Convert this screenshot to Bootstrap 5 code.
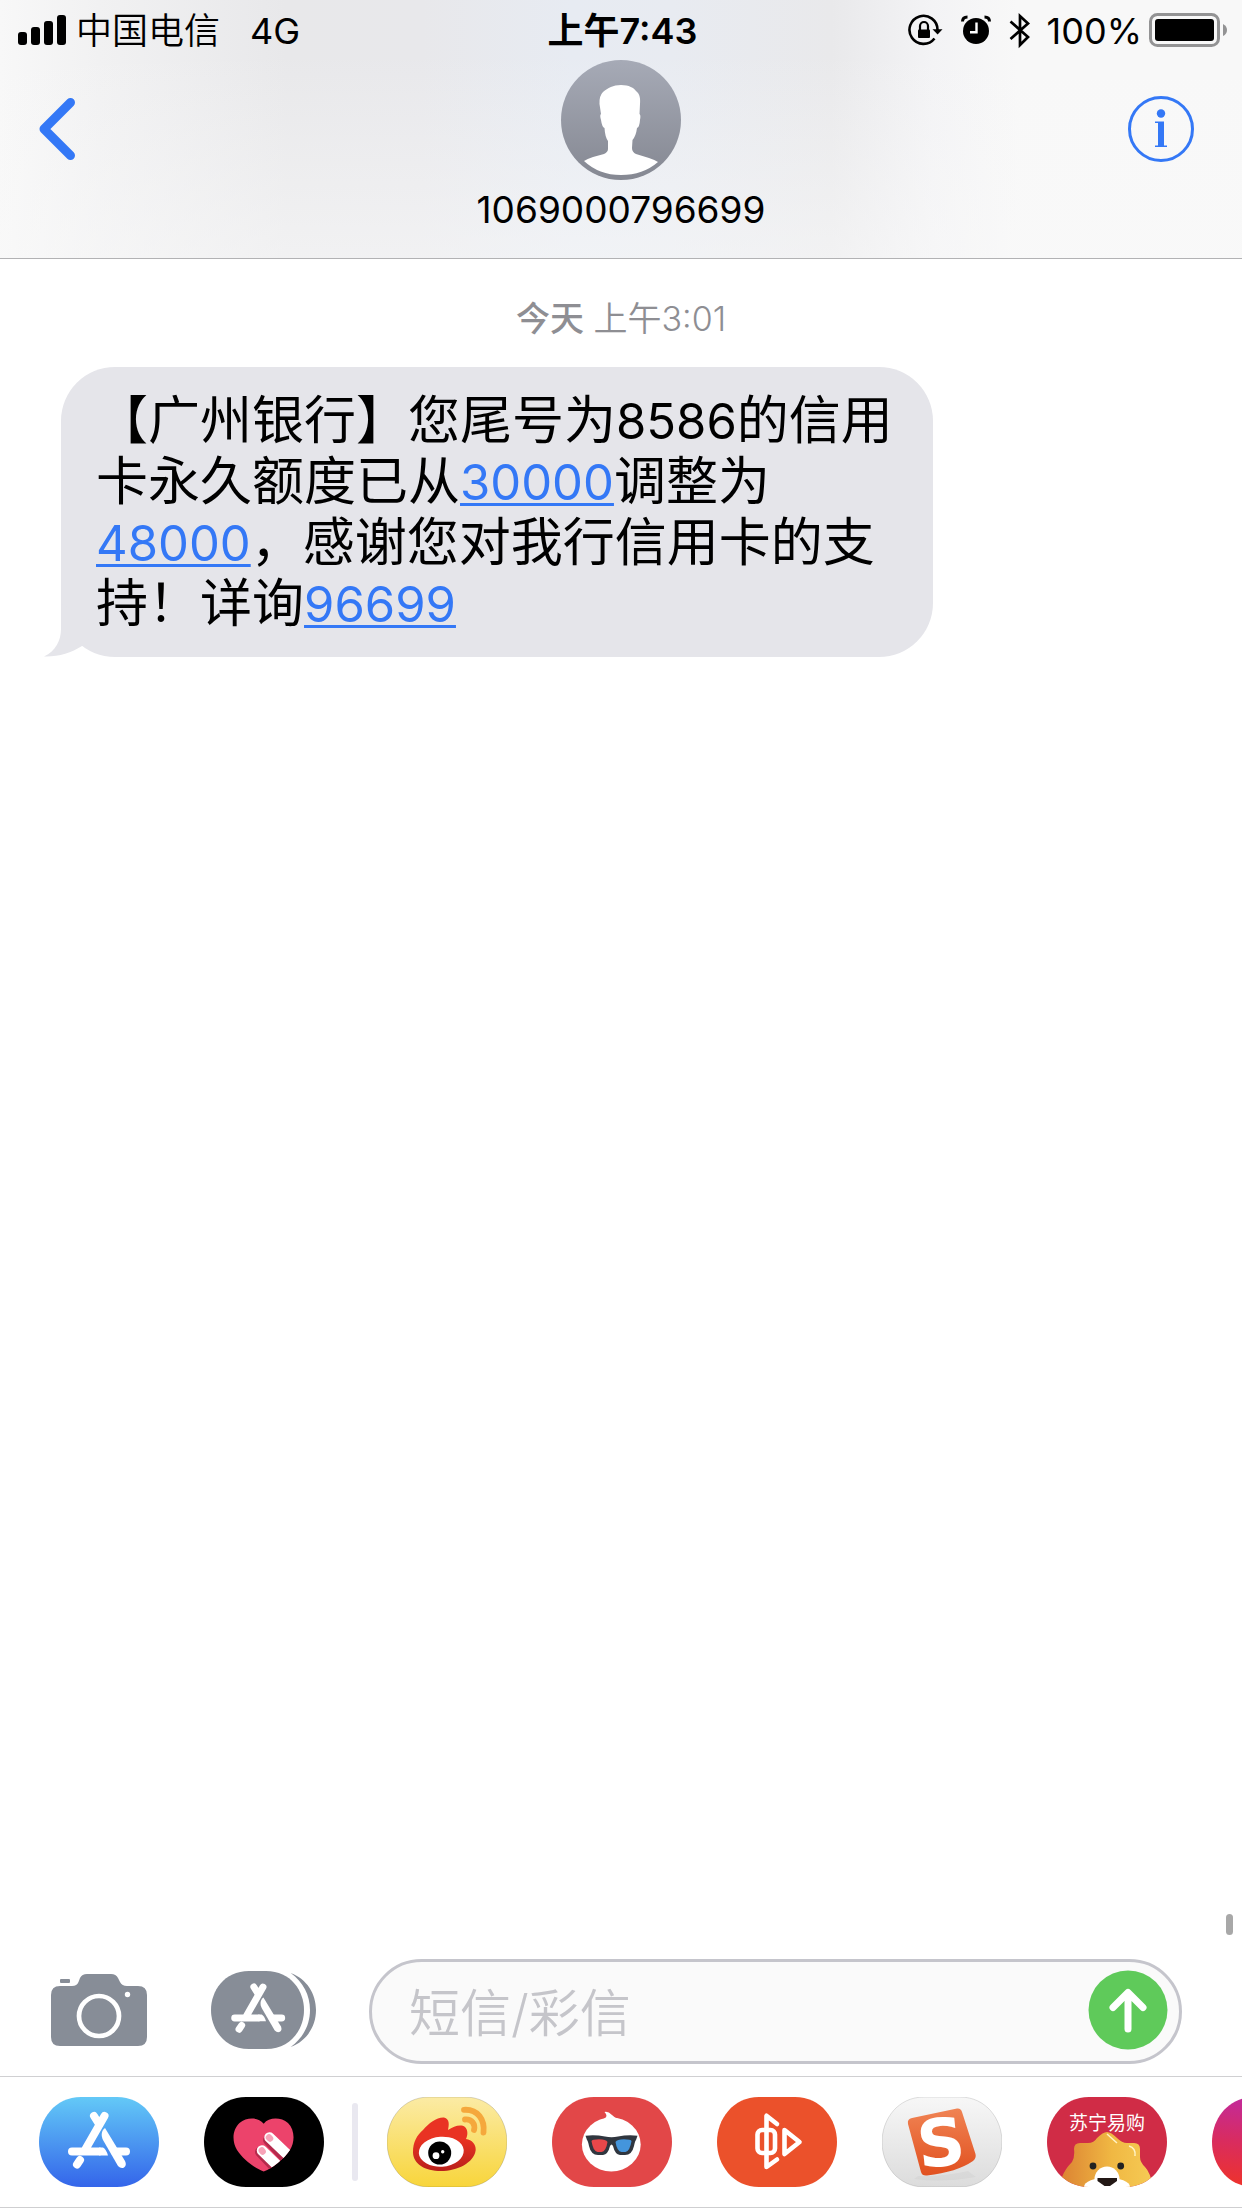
<!DOCTYPE html>
<html lang="zh-CN">
<head>
<meta charset="utf-8">
<meta name="viewport" content="width=device-width, initial-scale=1">
<title>1069000796699</title>
<link href="https://cdn.jsdelivr.net/npm/bootstrap@5.3.0/dist/css/bootstrap.min.css" rel="stylesheet">
<style>
:root { --ios-blue: #3478f6; --ios-gray: #878d97; }
body { font-family: Inter, "Noto Sans CJK SC", sans-serif; color: #000; background: #fff; }
svg { display: block; flex: none; }
.phone-head {
  border-bottom: 1px solid #b2b2b4;
  background:
    linear-gradient(to bottom, rgba(249,249,249,0) 20%, rgba(249,249,249,.55)),
    linear-gradient(to right, #f8f8f8 0, #f1f1f2 8%, #e8e8ea 23%, #e8e8eb 34%, #e7ebf2 46%, #e8ebf1 54%, #e9e9eb 67%, #f3f3f5 75%, #f8f8f8 82%);
}
.status-row { height: 60px; padding: 0 15px 0 18px; font-size: 36px; line-height: 60px; }
.status-row span, .clock { padding-top: 2px; }
.carrier { margin-left: 9px; font-weight: 350; }
.network { margin-left: 30px; }
.clock { font-weight: 600; line-height: 58px; }
.status-icons svg + svg { margin-left: 18px; }
.charge { margin: 0 7px 0 16px; }
.title-row { height: 198px; }
.title-row .side { padding: 36px 48px 0 38px; }
.contact { font-size: 37px; line-height: 60px; }
.stamp { padding-top: 30px; font-size: 34px; line-height: 60px; color: #8e8e93; font-weight: 350; }
.stamp strong { font-weight: 500; }
.thread { padding: 0 61px; }
.bubble { max-width: 872px; margin-top: 18px; padding: 23px 32px 23px 35px; border-radius: 54px; background: #e5e5ea; font-size: 52px; line-height: 61px; }
.bubble .tail { left: -17px; bottom: 0; }
.num { font-size: 49px; line-height: 1; }
a.num { color: var(--ios-blue); text-decoration-thickness: 3px; text-underline-offset: 3px; text-decoration-skip-ink: none; }
.scroll-thumb { right: 9px; bottom: 24px; width: 7px; height: 21px; border-radius: 4px; background: #a8a8a8; }
.composer { padding: 0 60px 12px 51px; }
.composer .btn { margin-bottom: 3px; }
.tool-apps { margin: 0 53px 0 64px; }
.entry { height: 105px; padding: 0 11px 0 37px; border: 3px solid #c5c5cc; border-radius: 53px; background: #fafafa; }
.entry .form-control { padding: 4px 0 0; font-size: 51px; line-height: 60px; font-weight: 350; color: #000; }
.entry .form-control::placeholder { color: #c5c5ca; opacity: 1; }
.app-strip { border-top: 1px solid #d0d0d2; border-bottom: 1px solid #cfcfd1; padding: 20px 0 20px 39px; }
.app-group { gap: 45px; }
.strip-divider { flex: none; width: 6px; height: 78px; margin: 0 29px 0 28px; border-radius: 3px; background: #e9e8f0; }
</style>
<script src="https://cdn.jsdelivr.net/npm/bootstrap@5.3.0/dist/js/bootstrap.bundle.min.js"></script>
</head>
<body class="d-flex flex-column min-vh-100 overflow-hidden">

<!-- shared shapes -->
<svg width="0" height="0" class="position-absolute" aria-hidden="true">
  <defs>
    <path id="pill" d="M42 0H78C104 0 120 22 120 45S104 90 78 90H42C16 90 0 68 0 45S16 0 42 0Z"/>
    <clipPath id="pillClip"><use href="#pill"/></clipPath>
    <g id="storeMark" fill="none" stroke="#fff" stroke-width="8" stroke-linecap="round">
      <path d="M55 19L60 27M65.500 19L46 53M33 54.500H60M76 54.500H87M41 63L38 67.500"/>
      <path d="M60 50.500H64Q67 52 69 58.400H60Z" fill="#fff" stroke="none"/>
      <path d="M66 31C62 34 62 39 64 43L79 69Q82 72 85 70.500Q88 68 86 64Z" fill="#fff" stroke="none"/>
    </g>
    <linearGradient id="gStore" x2="0" y2="1"><stop stop-color="#63c9f7"/><stop offset="1" stop-color="#3465ea"/></linearGradient>
    <linearGradient id="gYellow" x2="0" y2="1"><stop stop-color="#fbeba5"/><stop offset="1" stop-color="#f8d53b"/></linearGradient>
    <linearGradient id="gFlame" x2="0" y2="1"><stop offset=".4" stop-color="#e93323"/><stop offset="1" stop-color="#b9201a"/></linearGradient>
    <linearGradient id="gSilver" x2="0" y2="1"><stop stop-color="#f7f7f7"/><stop offset="1" stop-color="#dcdcdc"/></linearGradient>
    <linearGradient id="gOrange" x2="0" y2="1"><stop stop-color="#f08353"/><stop offset="1" stop-color="#e1501f"/></linearGradient>
    <linearGradient id="gLion"><stop stop-color="#dc8433"/><stop offset=".55" stop-color="#f0b843"/><stop offset="1" stop-color="#f6cb55"/></linearGradient>
    <linearGradient id="gMagenta" x1=".25" y1="0" x2=".1" y2="1"><stop stop-color="#c22a9c"/><stop offset=".5" stop-color="#d92c5e"/><stop offset="1" stop-color="#ef3329"/></linearGradient>
    <linearGradient id="gAvatar" x2="0" y2="1"><stop stop-color="#a6aab6"/><stop offset="1" stop-color="#858892"/></linearGradient>
    <clipPath id="heartClip"><path id="heart" d="M59.700 26.700C65 20 77 20 84 26C91 33 91 45 86 53C80 62 69 71 59.700 74.500C50 71 39 62 33 53C28 45 28 33 35.500 26C43 20 54 20 59.700 26.700Z"/></clipPath>
  </defs>
</svg>

<header class="phone-head">
  <div class="status-row d-flex">
    <div class="d-flex align-items-center flex-fill w-50">
      <svg width="49" height="30" aria-hidden="true"><rect y="17" width="9" height="13" rx="3"/><rect x="13" y="12" width="9" height="18" rx="3"/><rect x="26" y="6" width="9" height="24" rx="3"/><rect x="39" width="9" height="30" rx="3"/></svg>
      <span class="carrier">中国电信</span><span class="network">4G</span>
    </div>
    <div class="clock text-nowrap">上午7:43</div>
    <div class="status-icons d-flex align-items-center justify-content-end flex-fill w-50">
      <svg width="35" height="32" aria-label="竖排方向锁定">
        <path d="M29.500 16A14 14 0 1 0 26.500 24.500" fill="none" stroke="#000" stroke-width="2.600"/>
        <path d="M24.500 15.200H34.500L29.600 20.600Z"/><rect x="10" y="15.500" width="12" height="8.500" rx="1"/>
        <path d="M12 16V12A4 4 0 0 1 20 12V16" fill="none" stroke="#000" stroke-width="2.200"/>
      </svg>
      <svg width="30" height="30" aria-label="闹钟">
        <circle cx="15" cy="16" r="13"/><path d="M1.500 6.500Q1.500 2 6.500 2M28.500 6.500Q28.500 2 23.500 2" fill="none" stroke="#000" stroke-width="3"/>
        <path d="M15.500 7.500V17.300H9" fill="none" stroke="#fff" stroke-width="2.400"/>
      </svg>
      <svg width="22" height="37" aria-label="蓝牙"><path d="M1.500 9.500L19 25L11 33V4L19 11.500L1.500 27" fill="none" stroke="#000" stroke-width="2.700"/></svg>
      <span class="charge">100%</span>
      <svg width="78" height="34" aria-hidden="true">
        <rect x="1.500" y="1.500" width="68" height="31" rx="7" fill="none" stroke="#939394" stroke-width="3"/>
        <rect x="6" y="6" width="59" height="22" rx="3"/><path d="M74 11Q78 13 78 17T74 23Z" fill="#939394"/>
      </svg>
    </div>
  </div>
  <div class="title-row d-flex justify-content-between">
    <div class="side flex-fill w-50">
      <button type="button" class="btn p-0 border-0" aria-label="返回"><svg width="38" height="66"><path d="M32.500 6.500L6 33L32.500 59.500" fill="none" stroke="#3478f6" stroke-width="9" stroke-linecap="round" stroke-linejoin="round"/></svg></button>
    </div>
    <div class="d-flex flex-column align-items-center">
      <svg width="120" height="120" aria-hidden="true">
        <circle cx="60" cy="60" r="60" fill="url(#gAvatar)"/>
        <path d="M60 25C68 25 73 28 75 31C79 34 79.500 39 79 44L78.500 54Q80 55 79 60Q78.500 67 76 68Q75 76 71.500 80L71 88Q71 92 75 94L88 98Q94 100 97 102Q82 115 60 115T23 101Q26 99 32 97L43 94Q47 92 47 89V81Q44 77 43.500 68Q41 67 40 60Q38.500 55 40 54L38.500 44Q38 36 42 32C47 28 52 25 60 25Z" fill="#fff"/>
      </svg>
      <div class="contact">1069000796699</div>
    </div>
    <div class="side flex-fill w-50 d-flex justify-content-end align-items-start">
      <button type="button" class="btn p-0 border-0" aria-label="详细信息"><svg width="66" height="66" fill="#3478f6"><circle cx="33" cy="33" r="31.500" fill="none" stroke="#3478f6" stroke-width="3"/><circle cx="33" cy="17.500" r="4.200"/><path d="M27 25.500H36V49.500H39V51H27V49.500H30V27H27Z"/></svg></button>
    </div>
  </div>
</header>

<main class="flex-grow-1 position-relative">
  <div class="stamp text-center"><strong>今天</strong> 上午3:01</div>
  <div class="thread d-flex">
    <div class="bubble position-relative">【广州银行】您尾号为<span class="num">8586</span>的信用卡永久额度已从<a class="num" href="tel:30000">30000</a>调整为<a class="num" href="tel:48000">48000</a>，感谢您对我行信用卡的支持！详询<a class="num" href="tel:96699">96699</a>
      <svg class="tail position-absolute" width="60" height="54" aria-hidden="true"><path d="M17 0V26C17 37 12 48 0 53.500C14 54 27 50 38 43L50 20Z" fill="#e5e5ea"/></svg>
    </div>
  </div>
  <div class="scroll-thumb position-absolute"></div>
</main>

<form class="composer d-flex align-items-center">
  <button type="button" class="btn p-0 border-0" aria-label="相机">
    <svg width="96" height="72"><path d="M0 21Q0 12 9 12H21Q26 12 27.500 8L29 4Q31 0 36 0H60Q65 0 67 4L69 8Q71 12 76 12H87Q96 12 96 21V63Q96 72 87 72H9Q0 72 0 63Z" fill="#878d97"/><rect x="9" y="5" width="10" height="4" rx="1" fill="#878d97"/><circle cx="48" cy="42" r="20" fill="none" stroke="#fff" stroke-width="4.700"/><circle cx="76.500" cy="20.500" r="2.700" fill="#fff"/></svg>
  </button>
  <button type="button" class="tool-apps btn p-0 border-0" aria-label="应用">
    <svg width="105" height="78"><path d="M38 0H55C80 0 93 20 93 39S80 78 55 78H38C13 78 0 58 0 39S13 0 38 0Z" fill="#878d97"/><path d="M79.700 2C96 8 105 23 105 39S96 70 79.700 76C92 67 99 54 99 39S92 11 79.700 2Z" fill="#878d97"/><use href="#storeMark" transform="translate(-5 -.5) scale(.87)"/></svg>
  </button>
  <div class="entry d-flex align-items-center flex-grow-1">
    <input type="text" class="form-control border-0 bg-transparent shadow-none" placeholder="短信/彩信" aria-label="短信/彩信">
    <button type="submit" class="btn p-0 border-0" aria-label="发送"><svg width="80" height="80"><circle cx="40" cy="40" r="39.500" fill="#5fca5a"/><path d="M40 59V23M25 37.500L40 22.500L55 37.500" fill="none" stroke="#fff" stroke-width="7" stroke-linecap="round" stroke-linejoin="round"/></svg></button>
  </div>
</form>

<nav class="app-strip d-flex align-items-center overflow-hidden" aria-label="信息应用">
  <div class="app-group d-flex">
    <a href="#store" aria-label="App Store"><svg width="120" height="90"><use href="#pill" fill="url(#gStore)"/><use href="#storeMark"/></svg></a>
    <a href="#touch" aria-label="Digital Touch"><svg width="120" height="90"><use href="#pill"/><use href="#heart" fill="#ec436b"/>
      <g clip-path="url(#heartClip)" stroke-linecap="round"><path d="M64 43L84 64M56 55L74 74" stroke="#b52a4c" stroke-width="10"/><path d="M65.500 40.500L88 62M58 53.500L78 73" stroke="#fff" stroke-width="10.500"/><path d="M65 40.500L66 41.500M57.800 53.500L58.600 54.500" stroke="#f7a3b8" stroke-width="6.500"/></g></svg></a>
  </div>
  <div class="strip-divider"></div>
  <div class="app-group d-flex">
    <a href="#weibo" aria-label="微博"><svg width="120" height="90"><use href="#pill" fill="url(#gYellow)" stroke="#000" stroke-opacity=".15"/>
      <path d="M26 55C26 45 30 38 36 33C42 26 50 20 57 20.500C63 22 62 28 61 33C67 29 74 27 78 30C81 33 81 38 79 42C85 43 89 47 88.700 53C87 66 70 74 54 74C38 74 26 67 26 55Z" fill="url(#gFlame)"/>
      <ellipse cx="54.300" cy="54.700" rx="22.500" ry="15" fill="#fff" transform="rotate(-4 54 55)"/><circle cx="52.700" cy="56" r="11.500"/><circle cx="49" cy="58.700" r="3.400" fill="#fff"/><circle cx="55.700" cy="54.700" r="1.700" fill="#fff"/>
      <path d="M77 12.800C91 12 98 23 96.500 35.500M78 22.500C85 22 88.500 27 87 33" fill="none" stroke="#f5a83c" stroke-width="5.800" stroke-linecap="round"/></svg></a>
    <a href="#movies" aria-label="淘票票"><svg width="120" height="90"><use href="#pill" fill="#e24748"/>
      <ellipse cx="59.300" cy="47.500" rx="29.400" ry="27" fill="#fff"/><path d="M44 26Q54 22 54.500 19Q54.500 17 52.500 15Q56 14 60 18Q64 22 74 26Z" fill="#fff"/>
      <path d="M33.500 38.700Q43 37.500 53 39.500Q59.500 41 66 39.500Q76 37.500 85.500 38.700L84 43Q83 44 82 49Q80 58 73 58H68Q63 57.500 61 49Q59.500 46 58 49Q56 57.500 51 58H46Q39 58 37 49Q36 44 35 43Z" fill="#30363f"/>
      <path d="M39.500 44Q40 42.300 47 42.300T55.500 45Q54 54.500 49.500 55H45.500Q41 54 39.500 44Z" fill="#e8474a"/><path d="M79.500 44Q79 42.300 72 42.300T63.500 45Q65 54.500 69.500 55H73.500Q78 54 79.500 44Z" fill="#4495dc"/></svg></a>
    <a href="#player" aria-label="影音"><svg width="120" height="90"><use href="#pill" fill="#eb512b"/>
      <g fill="none" stroke="#fff" stroke-width="4.600" stroke-linecap="round" stroke-linejoin="round"><rect x="40.500" y="33" width="17.500" height="23" rx="4.500"/><path d="M60 27L49.500 18.800V70L60 62.500M67.500 33L82.500 45L67.500 57Z"/></g></svg></a>
    <a href="#sogou" aria-label="搜狗输入法"><svg width="120" height="90"><use href="#pill" fill="url(#gSilver)" stroke="#000" stroke-opacity=".12"/>
      <path d="M36 79Q60 80 86 74L94 80Q60 86 32 82Z" fill="#000" opacity=".03"/><path d="M30 21L75 11.500Q79 11 80 15L93.500 57Q94.500 61 91 64Q75 75 45 78.500Q40 79 39 75L26 27Q25 22 30 21Z" fill="url(#gOrange)"/>
      <text x="59" y="69" text-anchor="middle" transform="rotate(-6 59 45)" fill="#fff" font-family="DejaVu Sans, sans-serif" font-weight="700" font-size="66">S</text></svg></a>
    <a href="#suning" aria-label="苏宁易购"><svg width="120" height="90"><use href="#pill" fill="#d02c46"/>
      <g clip-path="url(#pillClip)"><path d="M15 92V80Q18 72 25 65Q28 60 27 52Q27 46 33 46H41Q47 46 50 41Q56 35 60 35T70 41Q75 46 80 46H87Q93 46 93 52V60Q93 65 98 70Q104 76 106 92Z" fill="url(#gLion)"/><path d="M60 37L70 46M82 49Q89 51 88 59" fill="none" stroke="#fff3c4" stroke-width="1.500"/>
      <circle cx="46" cy="69" r="3.400" fill="#222"/><circle cx="73.700" cy="69" r="3.400" fill="#222"/><circle cx="60" cy="82" r="12.500" fill="#fff"/><ellipse cx="60" cy="90" rx="23" ry="9.500" fill="#fff"/><path d="M50.500 81H70V84L63 89H57.500L50.500 84Z" fill="#231815"/></g>
      <text x="60" y="33" text-anchor="middle" fill="#fff" font-family="Noto Sans CJK SC, sans-serif" font-size="19">苏宁易购</text></svg></a>
    <a href="#more" aria-label="更多应用"><svg width="120" height="90"><use href="#pill" fill="url(#gMagenta)"/></svg></a>
  </div>
</nav>
</body>
</html>
